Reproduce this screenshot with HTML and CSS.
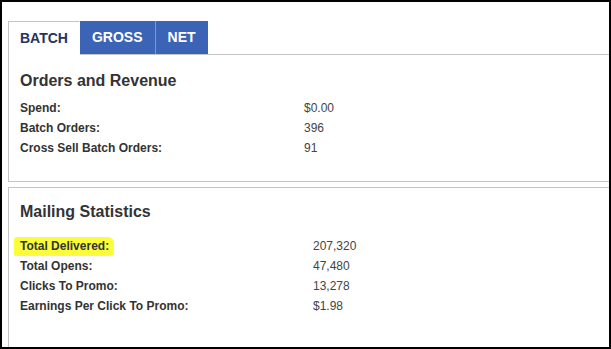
FILE: index.html
```html
<!DOCTYPE html>
<html lang="en">
<head>
    <meta charset="UTF-8">
    <meta name="viewport" content="width=device-width, initial-scale=1.0">
    <title>Batch Report</title>
    <link rel="stylesheet" href="styles.css">
</head>
<body>
    <div class="frame">
        <nav class="tabs">
            <a class="tab active">BATCH</a>
            <a class="tab">GROSS</a>
            <a class="tab tab-last">NET</a>
        </nav>

        <section class="panel panel-orders">
            <h2>Orders and Revenue</h2>
            <dl class="stats stats-orders">
                <dt>Spend:</dt><dd>$0.00</dd>
                <dt>Batch Orders:</dt><dd>396</dd>
                <dt>Cross Sell Batch Orders:</dt><dd>91</dd>
            </dl>
        </section>

        <section class="panel panel-mailing">
            <h2>Mailing Statistics</h2>
            <dl class="stats stats-mailing">
                <dt><span class="marker">Total Delivered:</span></dt><dd>207,320</dd>
                <dt>Total Opens:</dt><dd>47,480</dd>
                <dt>Clicks To Promo:</dt><dd>13,278</dd>
                <dt>Earnings Per Click To Promo:</dt><dd>$1.98</dd>
            </dl>
        </section>
    </div>
</body>
</html>
```

FILE: styles.css
```css
body {
    margin: 0;
    background-color: #fff;
    font-family: "Liberation Sans", Arial, sans-serif;
}
.frame {
    width: 611px;
    height: 349px;
    box-sizing: border-box;
    border: 2px solid #000;
    padding: 19px 0 0 6px;
    overflow: hidden;
}
.tabs {
    display: flex;
    border-bottom: 1px solid #c4c4c4;
}
.tab {
    display: block;
    height: 33px;
    line-height: 33px;
    padding: 0 12px;
    font-size: 14px;
    font-weight: bold;
    color: #fff;
    background-color: #3b64b6;
}
.tab-last {
    border-left: 1px solid #7d98d0;
}
.tab.active {
    height: 33px;
    padding: 0 11px;
    margin-bottom: -1px;
    border: 1px solid #c4c4c4;
    border-right-color: #fff;
    border-bottom: 0;
    color: #28325c;
    background-color: #fff;
}
.panel {
    border-left: 1px solid #c4c4c4;
    padding-left: 11px;
}
.panel-orders {
    padding-top: 16px;
    padding-bottom: 23px;
    border-bottom: 1px solid #c4c4c4;
}
.panel-mailing {
    margin-top: 5px;
    padding-top: 14px;
    border-top: 1px solid #c4c4c4;
    height: 200px;
}
h2 {
    margin: 0;
    font-size: 16px;
    line-height: 20px;
    color: #333;
}
.stats {
    display: grid;
    margin: 7px 0 0;
    font-size: 12px;
    line-height: 20px;
}
.stats-orders {
    grid-template-columns: 284px 1fr;
}
.stats-mailing {
    grid-template-columns: 293px 1fr;
    margin-top: 14px;
}
dt {
    font-weight: bold;
    color: #333;
}
dd {
    margin: 0;
    color: #444;
}
.marker {
    background-color: #fbfc3a;
    padding: 2px 5px 3px 6px;
    margin-left: -6px;
    border-radius: 3px 6px 4px 2px;
}
```
